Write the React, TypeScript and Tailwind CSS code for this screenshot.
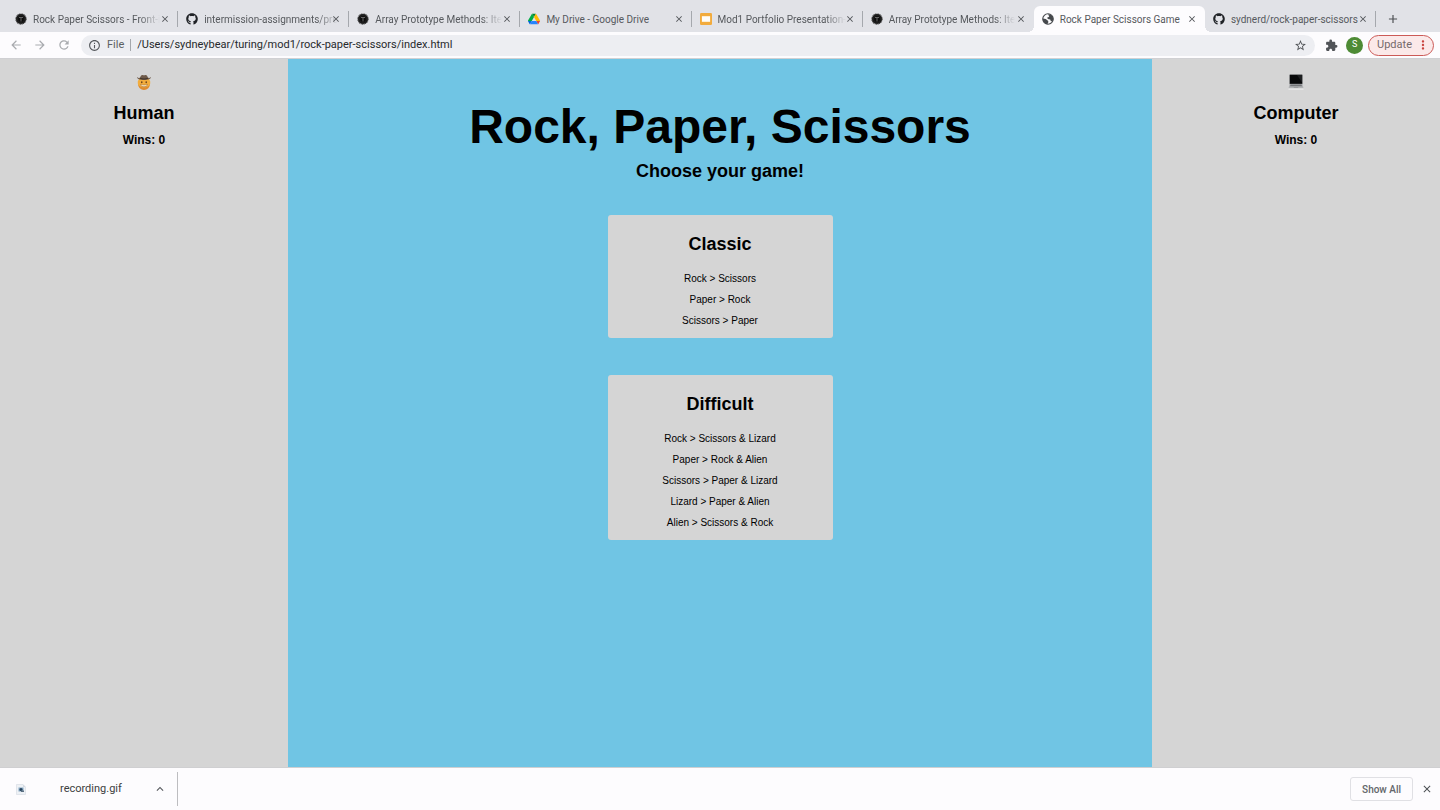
import React from "react";
import {
  MdArrowBack,
  MdArrowForward,
  MdRefresh,
  MdInfoOutline,
  MdStarBorder,
  MdExtension,
  MdMoreVert,
  MdClose,
  MdAdd,
  MdKeyboardArrowUp,
} from "react-icons/md";
import { FaGithub } from "react-icons/fa";

type TabIcon = "turing" | "github" | "drive" | "slides" | "globe";

interface Tab {
  id: number;
  title: string;
  icon: TabIcon;
  active?: boolean;
  divider?: boolean;
  faded?: boolean;
}

const tabs: Tab[] = [
  { id: 1, title: "Rock Paper Scissors - Front-i", icon: "turing", divider: true, faded: true },
  { id: 2, title: "intermission-assignments/pre", icon: "github", divider: true, faded: true },
  { id: 3, title: "Array Prototype Methods: Ite", icon: "turing", divider: true, faded: true },
  { id: 4, title: "My Drive - Google Drive", icon: "drive", divider: true },
  { id: 5, title: "Mod1 Portfolio Presentation-", icon: "slides", divider: true, faded: true },
  { id: 6, title: "Array Prototype Methods: Ite", icon: "turing", faded: true },
  { id: 7, title: "Rock Paper Scissors Game", icon: "globe", active: true },
  { id: 8, title: "sydnerd/rock-paper-scissors", icon: "github", divider: true },
];

function TuringIcon() {
  return (
    <svg viewBox="0 0 24 24" className="size-3">
      <circle cx="12" cy="12" r="10" fill="#151515" stroke="#2c2c2c" strokeWidth="2.500" strokeDasharray="2 1" />
      <circle cx="12" cy="12" r="7" fill="#0c0c0c" stroke="#333" strokeWidth="1" />
      <path d="M8 8h8v2h-3v7h-2v-7H8z" fill="#666" />
    </svg>
  );
}

function DriveIcon() {
  return (
    <svg viewBox="0 0 87.3 78" className="size-3">
      <path d="m6.6 66.85 3.85 6.65c.8 1.4 1.95 2.5 3.3 3.3l13.75-23.8h-27.5c0 1.55.4 3.1 1.2 4.5z" fill="#0066da" />
      <path d="m43.65 25-13.75-23.8c-1.35.8-2.5 1.9-3.3 3.3l-25.4 44a9.06 9.06 0 0 0-1.2 4.5h27.5z" fill="#00ac47" />
      <path d="m73.55 76.8c1.35-.8 2.5-1.9 3.3-3.3l1.6-2.75 7.65-13.25c.8-1.4 1.2-2.95 1.2-4.5h-27.5l5.85 11.5z" fill="#ea4335" />
      <path d="m43.65 25 13.75-23.8c-1.35-.8-2.9-1.2-4.5-1.2h-18.5c-1.6 0-3.15.45-4.5 1.2z" fill="#00832d" />
      <path d="m59.8 53h-32.3l-13.75 23.8c1.35.8 2.9 1.2 4.5 1.2h50.8c1.6 0 3.15-.45 4.5-1.2z" fill="#2684fc" />
      <path d="m73.4 26.5-12.7-22c-.8-1.4-1.95-2.5-3.3-3.3l-13.75 23.8 16.15 28h27.45c0-1.55-.4-3.1-1.2-4.5z" fill="#ffba00" />
    </svg>
  );
}

function SlidesIcon() {
  return (
    <svg viewBox="0 0 12 12" className="size-3">
      <rect width="12" height="12" rx="1.2" fill="#f2ab3c" />
      <rect x="1.9" y="3.2" width="8.2" height="5.6" fill="#fffdf8" />
    </svg>
  );
}

function GlobeIcon() {
  return (
    <svg viewBox="0 0 24 24" className="size-3">
      <circle cx="12" cy="12" r="10.500" fill="#fdfcfe" stroke="#45484c" strokeWidth="2.200" />
      <path d="M13 2c5 .5 9.500 5 9.500 10 0 2-1 4-2 5l-3-1-1-3-5-1-1-3 3-1 1-2-2-2z" fill="#45484c" />
      <path d="M1.500 11l6 1 5 4v3l-2 3.500C5 22 1.500 17 1.500 11z" fill="#45484c" />
    </svg>
  );
}

function Favicon({ icon }: { icon: TabIcon }) {
  switch (icon) {
    case "turing":
      return <TuringIcon />;
    case "github":
      return <FaGithub className="size-3 text-[#1f2226]" />;
    case "drive":
      return <DriveIcon />;
    case "slides":
      return <SlidesIcon />;
    default:
      return <GlobeIcon />;
  }
}

function BrowserTab({ tab }: { tab: Tab }) {
  return (
    <div
      className={
        tab.active
          ? "relative flex h-[26px] min-w-0 flex-1 items-center rounded-t-md bg-[#fdfcfe] px-2"
          : "relative flex h-[26px] min-w-0 flex-1 items-center px-2"
      }
    >
      {tab.active && (
        <>
          <span className="absolute bottom-0 -left-1.5 size-1.5 bg-[radial-gradient(circle_at_0_0,transparent_6px,#fdfcfe_6px)]" />
          <span className="absolute -right-1.5 bottom-0 size-1.5 bg-[radial-gradient(circle_at_100%_0,transparent_6px,#fdfcfe_6px)]" />
        </>
      )}
      <button type="button" className="flex min-w-0 flex-1 items-center gap-1.5 text-left">
        <span className="flex w-3 shrink-0 justify-center">
          <Favicon icon={tab.icon} />
        </span>
        <span
          className={
            tab.faded
              ? "whitespace-nowrap [mask-image:linear-gradient(to_right,black_84%,transparent)]"
              : "whitespace-nowrap"
          }
        >
          {tab.title}
        </span>
      </button>
      <button type="button" aria-label={"Close " + tab.title} className="shrink-0 text-[#4f5256]">
        <MdClose className="size-2.5" />
      </button>
      {tab.divider && <span className="absolute top-[5px] right-0 h-4 w-px bg-[#a5a8ad]" />}
    </div>
  );
}

function CowboyIcon() {
  return (
    <svg viewBox="0 0 32 32" className="size-4">
      <circle cx="16" cy="18" r="12.500" fill="#f3ad3c" />
      <path d="M4 20a12 12 0 0 0 24 0c-2 9-22 9-24 0z" fill="#dd8a30" />
      <path d="M2 6c2 2 4 2 6 1.500C9 4 11 1.500 13 2c2 .6 4 .6 6 0 2-.5 4 2 5 5.500 2 .5 4 .5 6-1.500 0 4-5 6-14 6S2 10 2 6z" fill="#6e5a4a" />
      <path d="M8 7.500c5 1.800 11 1.800 16 0v2c-5 1.800-11 1.800-16 0z" fill="#40332a" />
      <ellipse cx="11.500" cy="16.500" rx="1.600" ry="2" fill="#6b431c" />
      <ellipse cx="20.500" cy="16.500" rx="1.600" ry="2" fill="#6b431c" />
      <path d="M9 21c4 1.200 10 1.200 14 0-1 6-13 6-14 0z" fill="#fff0d0" stroke="#96602b" strokeWidth="1" />
    </svg>
  );
}

function LaptopIcon() {
  return (
    <svg viewBox="0 0 32 32" className="size-4">
      <rect x="3" y="1" width="26" height="19" rx="1" fill="#3a3c3f" />
      <rect x="4" y="2" width="24" height="17" fill="#08090a" />
      <path d="M18 2h10v15z" fill="#1d1f21" />
      <path d="M3 20h26l2 9H1z" fill="#b0b2b4" />
      <path d="M5 21h22l1 3.500H4z" fill="#75777a" />
      <path d="M12 26h8l1 2H11z" fill="#9a9c9e" />
      <path d="M1 29h30v2H1z" fill="#f4f4f4" />
    </svg>
  );
}

function Player({ icon, name, wins }: { icon: React.ReactNode; name: string; wins: number }) {
  return (
    <aside className="flex w-1/5 flex-col items-center bg-[#d5d5d5] pt-[15px]">
      {icon}
      <h2 className="mt-[11px] text-lg leading-6 font-bold">{name}</h2>
      <p className="mt-[5px] text-xs leading-5 font-bold">Wins: {wins}</p>
    </aside>
  );
}

function GameCard({ name, rules }: { name: string; rules: string[] }) {
  return (
    <button
      type="button"
      className="flex w-[225px] flex-col items-center rounded-[3px] bg-[#d5d5d5] pt-[17px] pb-[7px]"
    >
      <span className="text-lg leading-6 font-bold">{name}</span>
      <span className="mt-3 flex flex-col text-[10px] leading-[21px]">
        {rules.map((rule) => (
          <span key={rule}>{rule}</span>
        ))}
      </span>
    </button>
  );
}

export default function App() {
  return (
    <div className="flex min-h-screen flex-col bg-[#fdfcfe] font-[Roboto,sans-serif] text-black">
      <header>
        <nav aria-label="Tabs" className="flex h-8 items-end bg-[#e1e2e7] pr-10 pl-[7px] text-[10px] text-[#56595d]">
          <div className="flex min-w-0 flex-1">
            {tabs.map((tab) => (
              <BrowserTab key={tab.id} tab={tab} />
            ))}
          </div>
          <div className="w-6 shrink-0 self-end pb-1.5 pl-2.5">
            <button type="button" aria-label="New tab" className="block text-[#4c4f53]">
              <MdAdd className="size-3.5" />
            </button>
          </div>
        </nav>

        <div className="flex h-[27px] items-center border-b border-[#d0d0d3] pr-1.5 pl-[9px]">
          <div className="flex gap-2.5 text-[#a9abaf]">
            <button type="button" aria-label="Back">
              <MdArrowBack className="size-3.5" />
            </button>
            <button type="button" aria-label="Forward">
              <MdArrowForward className="size-3.5" />
            </button>
            <button type="button" aria-label="Reload">
              <MdRefresh className="size-3.5" />
            </button>
          </div>
          <div className="ml-2.5 flex h-[21px] min-w-0 flex-1 items-center rounded-full bg-[#edeef2] pr-2 pl-[7px] text-[11px]">
            <MdInfoOutline className="size-[13px] shrink-0 text-[#55585c]" />
            <label htmlFor="address" className="ml-1.5 text-[#5c5f63]">
              File
            </label>
            <span className="mx-1.5 h-3 w-px bg-[#a5a8ad]" />
            <input
              id="address"
              type="text"
              defaultValue="/Users/sydneybear/turing/mod1/rock-paper-scissors/index.html"
              className="min-w-0 flex-1 bg-transparent text-[#27292c] outline-none"
            />
            <button type="button" aria-label="Bookmark this page" className="text-[#4f5256]">
              <MdStarBorder className="size-[13px]" />
            </button>
          </div>
          <button type="button" aria-label="Extensions" className="ml-2.5 text-[#515458]">
            <MdExtension className="size-[13px]" />
          </button>
          <button
            type="button"
            aria-label="Profile"
            className="ml-2 flex size-[17px] items-center justify-center rounded-full bg-[#4e8b35] text-[9px] text-white"
          >
            S
          </button>
          <button
            type="button"
            className="ml-[5px] flex h-[21px] items-center gap-1 rounded-full border border-[#cc5a57] bg-[#fbe9e9] pr-[3px] pl-2 text-[11px] text-[#75696b]"
          >
            Update
            <MdMoreVert className="size-3.5 text-[#c9423d]" />
          </button>
        </div>
      </header>

      <div className="flex flex-1 font-['Liberation_Sans',Arial,sans-serif]">
        <Player icon={<CowboyIcon />} name="Human" wins={0} />
        <main className="flex flex-1 flex-col items-center bg-[#70c5e4] pt-11">
          <h1 className="text-5xl leading-12 font-bold">Rock, Paper, Scissors</h1>
          <h2 className="mt-2 text-lg leading-6 font-bold">Choose your game!</h2>
          <section className="mt-8 flex flex-col gap-[37px]">
            <GameCard name="Classic" rules={["Rock > Scissors", "Paper > Rock", "Scissors > Paper"]} />
            <GameCard
              name="Difficult"
              rules={[
                "Rock > Scissors & Lizard",
                "Paper > Rock & Alien",
                "Scissors > Paper & Lizard",
                "Lizard > Paper & Alien",
                "Alien > Scissors & Rock",
              ]}
            />
          </section>
        </main>
        <Player icon={<LaptopIcon />} name="Computer" wins={0} />
      </div>

      <footer className="flex h-[43px] items-center border-t border-[#cfcfd1] pr-[7px]">
        <div className="flex h-[34px] w-[178px] items-center border-r border-[#bdbdc0] pr-2.5 pl-4 text-[11px] text-[#3c3e41]">
          <svg viewBox="0 0 20 22" className="h-[11px] w-2.5">
            <path d="M1 1h13l5 5v15H1z" fill="#eef1f5" stroke="#ccd3dc" strokeWidth="1" />
            <path d="M14 1v5h5z" fill="#d3d9e1" />
            <rect x="5" y="7" width="10" height="8" fill="#86a8c4" />
            <circle cx="10" cy="11" r="3" fill="#27435c" />
            <path d="M10 13h6v3h-6z" fill="#5b6f81" />
          </svg>
          <a href="#recording" className="ml-[34px] flex-1">
            recording.gif
          </a>
          <button type="button" aria-label="Download options" className="text-[#55585c]">
            <MdKeyboardArrowUp className="size-3.5" />
          </button>
        </div>
        <button
          type="button"
          className="ml-auto h-6 rounded-[3px] border border-[#e0e0e4] px-[11px] text-[10px] font-medium text-[#63666a]"
        >
          Show All
        </button>
        <button type="button" aria-label="Close downloads bar" className="ml-2 text-[#4c4f53]">
          <MdClose className="size-3" />
        </button>
      </footer>
    </div>
  );
}
